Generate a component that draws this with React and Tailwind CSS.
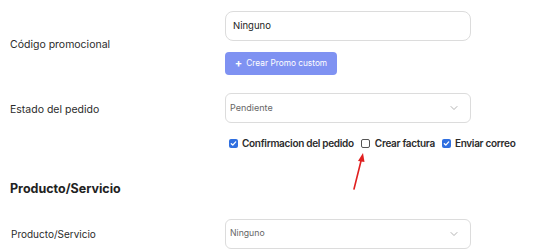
import { ChevronDown } from "lucide-react";

function Check({ checked }) {
  if (checked) {
    return (
      <span className="flex h-[9px] w-[9px] shrink-0 items-center justify-center rounded-[2px] bg-[#2f6fe0]">
        <svg width="7" height="7" viewBox="0 0 8 8" fill="none">
          <path d="M1.5 4.2 3.2 5.8 6.5 2.2" stroke="white" strokeWidth="1.5" strokeLinecap="round" strokeLinejoin="round" />
        </svg>
      </span>
    );
  }
  return <span className="block h-[9px] w-[9px] shrink-0 rounded-[2px] border border-[#555] bg-white" />;
}

export default function App() {
  return (
    <div className="relative h-[250px] w-[551px] overflow-hidden bg-white font-['Inter',sans-serif] text-[#2b2b2b]">
      {/* Código promocional */}
      <div className="flex items-center pt-[11px]">
        <div className="mt-[4px] w-[225px] shrink-0 pl-[10px] text-[10.5px]">Código promocional</div>
        <div className="w-[246px]">
          <div className="flex h-[30px] items-center rounded-[8px] border border-[#dcdcdc] px-[7px] text-[9.5px] text-[#222]">
            Ninguno
          </div>
          <button className="mt-[11px] flex h-[23px] w-[112px] items-center justify-center gap-[4px] rounded-[4px] bg-[#7f92f2] text-[8.3px] text-white">
            <span className="text-[11px] font-bold leading-none">+</span>
            <span>Crear Promo custom</span>
          </button>
        </div>
      </div>

      {/* Estado del pedido */}
      <div className="mt-[18px] flex items-center">
        <div className="mt-[4px] w-[225px] shrink-0 pl-[10px] text-[10.5px]">Estado del pedido</div>
        <div className="flex h-[30px] w-[246px] items-center justify-between rounded-[6px] border border-[#dcdcdc] pl-[4px] pr-[10px] text-[9px] text-[#666]">
          <span>Pendiente</span>
          <ChevronDown size={12} strokeWidth={1.5} className="text-[#999]" />
        </div>
      </div>

      {/* Checkboxes */}
      <div className="mt-[13px] flex items-center gap-[4px] whitespace-nowrap pl-[229px] text-[10px] font-semibold tracking-[-0.3px] text-[#2b2b2b]">
        <Check checked />
        <span>Confirmacion del pedido</span>
        <span className="ml-[3px]"><Check /></span>
        <span className="ml-[1px]">Crear factura</span>
        <span className="ml-[3px]"><Check checked /></span>
        <span>Enviar correo</span>
      </div>

      {/* Producto/Servicio heading */}
      <h2 className="mt-[29px] pl-[10px] text-[12.5px] font-bold text-[#222]">Producto/Servicio</h2>

      <div className="mt-[20px] flex items-center">
        <div className="mt-[2px] w-[225px] shrink-0 pl-[11px] text-[10px]">Producto/Servicio</div>
        <div className="flex h-[30px] w-[246px] items-center justify-between rounded-[6px] border border-[#dcdcdc] pl-[4px] pr-[10px] text-[8.7px] text-[#666]">
          <span>Ninguno</span>
          <ChevronDown size={12} strokeWidth={1.5} className="text-[#999]" />
        </div>
      </div>

      {/* Red arrow */}
      <svg className="absolute left-[345px] top-[148px]" width="26" height="46" viewBox="0 0 26 46">
        <path d="M9 41 L16.5 11" stroke="#e02020" strokeWidth="1.6" strokeLinecap="round" />
        <path d="M18 5 L13 13 L19.5 14 Z" fill="#e02020" />
      </svg>
    </div>
  );
}
